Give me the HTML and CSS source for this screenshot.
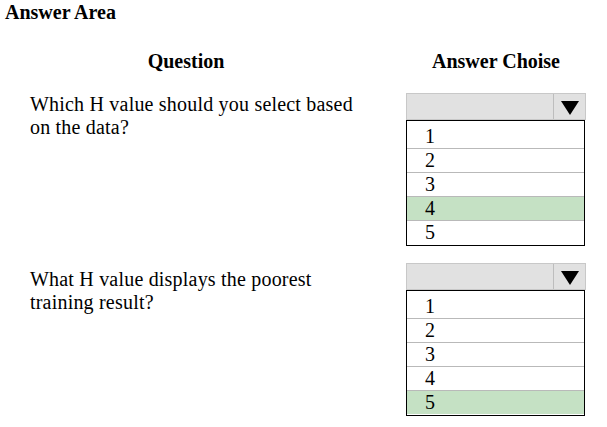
FILE: index.html
```html
<!DOCTYPE html>
<html lang="en">
<head>
<meta charset="utf-8">
<title>Answer Area</title>
<link rel="stylesheet" href="styles.css">
</head>
<body>
<div class="title">Answer Area</div>
<div class="heads">
  <div class="head-q">Question</div>
  <div class="head-a">Answer Choise</div>
</div>

<div class="qrow">
  <div class="qtext">Which H value should you select based on the data?</div>
  <div class="select">
    <div class="sel-head">
      <div class="sel-field"></div>
      <div class="sel-btn"><svg width="18" height="14" viewBox="0 0 18 14"><polygon points="0,0 18,0 9,14" fill="#000"/></svg></div>
    </div>
    <div class="list">
      <div class="opt">1</div>
      <div class="opt">2</div>
      <div class="opt">3</div>
      <div class="opt sel">4</div>
      <div class="opt">5</div>
    </div>
  </div>
</div>

<div class="qrow second">
  <div class="qtext">What H value displays the poorest training result?</div>
  <div class="select">
    <div class="sel-head">
      <div class="sel-field"></div>
      <div class="sel-btn"><svg width="18" height="14" viewBox="0 0 18 14"><polygon points="0,0 18,0 9,14" fill="#000"/></svg></div>
    </div>
    <div class="list">
      <div class="opt">1</div>
      <div class="opt">2</div>
      <div class="opt">3</div>
      <div class="opt">4</div>
      <div class="opt sel">5</div>
    </div>
  </div>
</div>
</body>
</html>
```
FILE: styles.css
```css
html, body {
  margin: 0;
  padding: 0;
  background: #fff;
}
body {
  font-family: "Liberation Serif", "Times New Roman", serif;
  font-size: 20px;
  line-height: 23px;
  color: #000;
}
.title {
  font-weight: bold;
  padding: 1px 0 0 5px;
}
.heads {
  display: flex;
  margin-top: 26px;
  font-weight: bold;
}
.head-q {
  width: 372px;
  text-align: center;
}
.head-a {
  margin-left: 34px;
  width: 180px;
  text-align: center;
}
.qrow {
  display: grid;
  grid-template-columns: 406px 180px;
  margin-top: 20px;
}
.qrow.second {
  margin-top: 17px;
}
.qtext {
  padding: 0 41px 0 30px;
  letter-spacing: 0.2px;
}
.second .qtext {
  padding-top: 5px;
}
.select {
  width: 180px;
}
.sel-head {
  box-sizing: border-box;
  height: 27px;
  border: 1px solid #c8c8c8;
  background: #e1e1e1;
  display: flex;
}
.sel-field {
  flex: 1;
}
.sel-btn {
  width: 32px;
  border-left: 1px solid #bdbdbd;
  display: flex;
  justify-content: center;
  align-items: flex-start;
  padding-top: 7px;
  box-sizing: border-box;
}
.sel-btn svg {
  display: block;
}
.list {
  box-sizing: border-box;
  width: 179px;
  border: 1px solid #000;
  padding: 4px 0 1px;
}
.opt {
  height: 23px;
  line-height: 23px;
  padding-left: 18px;
  border-bottom: 1px solid #b9b9b9;
}
.opt:last-child {
  border-bottom: none;
}
.opt.sel {
  background: #c5e1c4;
}
```
